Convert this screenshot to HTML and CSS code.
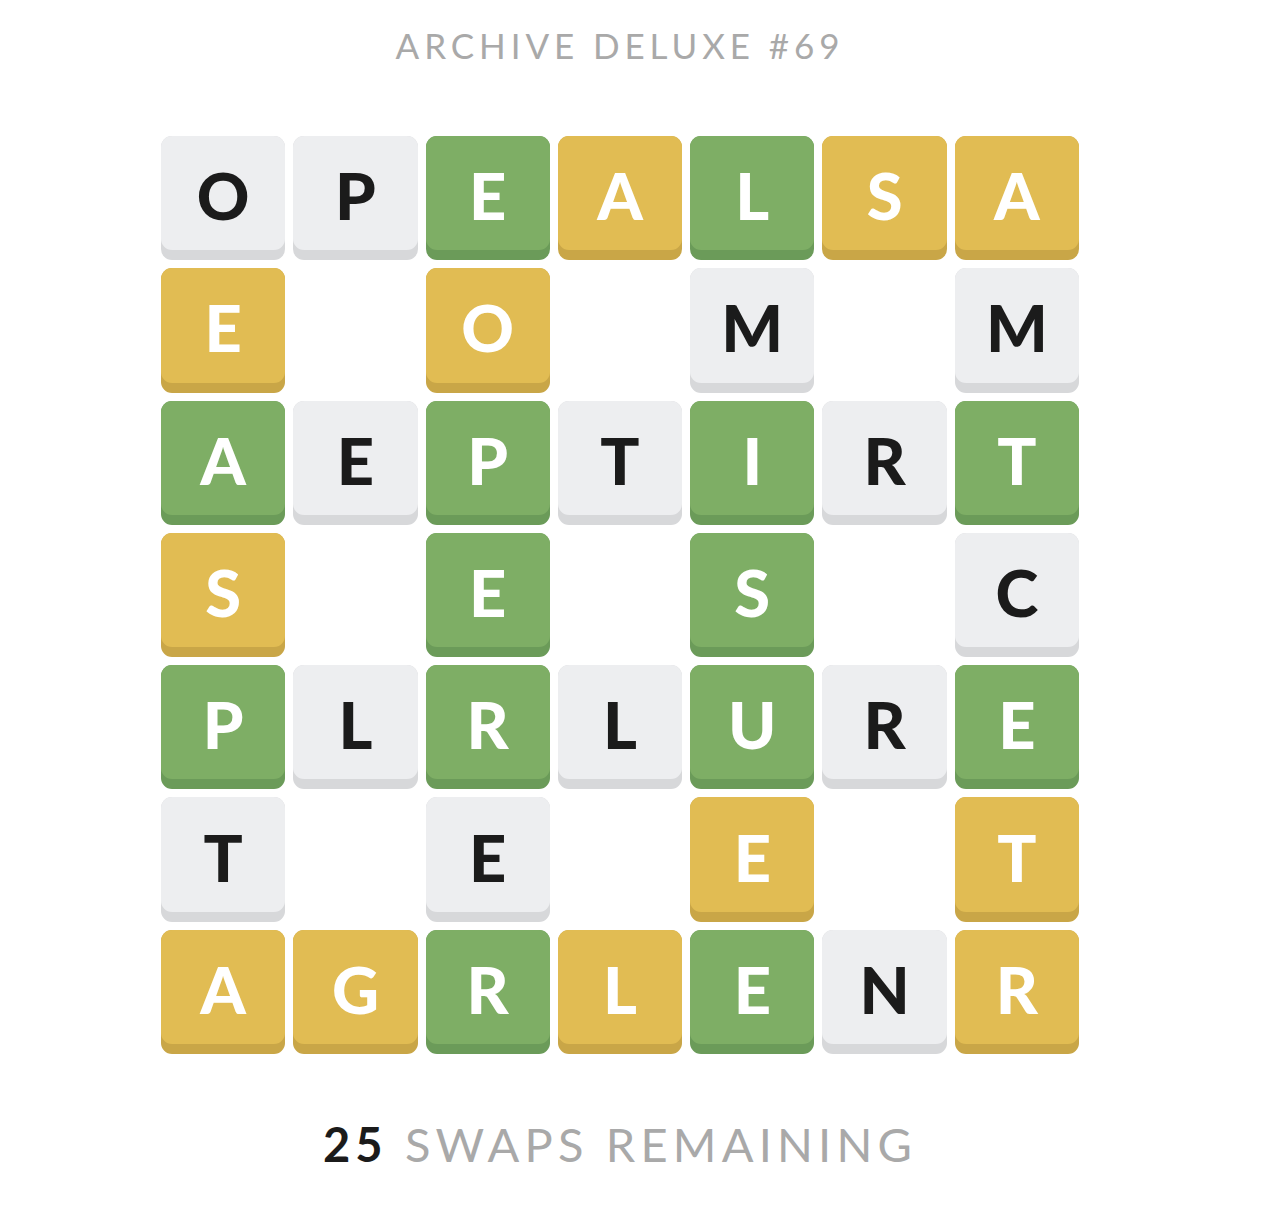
FILE: index.html
```html
<!DOCTYPE html>
<html>
<head>
<meta charset="utf-8">
<link rel="stylesheet" href="styles.css">
</head>
<body>
<main class="page">
  <h1 class="title">ARCHIVE DELUXE #69</h1>
  <div class="board">
    <div class="tile gray"><span>O</span></div>
    <div class="tile gray"><span>P</span></div>
    <div class="tile green"><span>E</span></div>
    <div class="tile yellow"><span>A</span></div>
    <div class="tile green"><span>L</span></div>
    <div class="tile yellow"><span>S</span></div>
    <div class="tile yellow"><span>A</span></div>

    <div class="tile yellow"><span>E</span></div>
    <div class="hole"></div>
    <div class="tile yellow"><span>O</span></div>
    <div class="hole"></div>
    <div class="tile gray"><span>M</span></div>
    <div class="hole"></div>
    <div class="tile gray"><span>M</span></div>

    <div class="tile green"><span>A</span></div>
    <div class="tile gray"><span>E</span></div>
    <div class="tile green"><span>P</span></div>
    <div class="tile gray"><span>T</span></div>
    <div class="tile green"><span>I</span></div>
    <div class="tile gray"><span>R</span></div>
    <div class="tile green"><span>T</span></div>

    <div class="tile yellow"><span>S</span></div>
    <div class="hole"></div>
    <div class="tile green"><span>E</span></div>
    <div class="hole"></div>
    <div class="tile green"><span>S</span></div>
    <div class="hole"></div>
    <div class="tile gray"><span>C</span></div>

    <div class="tile green"><span>P</span></div>
    <div class="tile gray"><span>L</span></div>
    <div class="tile green"><span>R</span></div>
    <div class="tile gray"><span>L</span></div>
    <div class="tile green"><span>U</span></div>
    <div class="tile gray"><span>R</span></div>
    <div class="tile green"><span>E</span></div>

    <div class="tile gray"><span>T</span></div>
    <div class="hole"></div>
    <div class="tile gray"><span>E</span></div>
    <div class="hole"></div>
    <div class="tile yellow"><span>E</span></div>
    <div class="hole"></div>
    <div class="tile yellow"><span>T</span></div>

    <div class="tile yellow"><span>A</span></div>
    <div class="tile yellow"><span>G</span></div>
    <div class="tile green"><span>R</span></div>
    <div class="tile yellow"><span>L</span></div>
    <div class="tile green"><span>E</span></div>
    <div class="tile gray"><span>N</span></div>
    <div class="tile yellow"><span>R</span></div>
  </div>
  <p class="status"><b class="count">25</b> SWAPS REMAINING</p>
</main>
</body>
</html>
```

FILE: styles.css
```css
html, body {
  margin: 0;
  padding: 0;
  background: #ffffff;
}

.page {
  width: 1240px;
  display: flex;
  flex-direction: column;
  align-items: center;
  font-family: "Lato", "Liberation Sans", sans-serif;
}

.title {
  margin: 24px 0 0 0;
  font-size: 35px;
  line-height: 42px;
  font-weight: 400;
  letter-spacing: 4.9px;
  color: #a9a9a9;
}

.board {
  margin-top: 70px;
  width: 918px;
  display: grid;
  grid-template-columns: repeat(7, 1fr);
  grid-auto-rows: 124.3px;
  gap: 8px;
}

.tile {
  position: relative;
  border-radius: 11px;
  display: flex;
  align-items: stretch;
}

.tile span {
  flex: 0 0 auto;
  width: 100%;
  height: calc(100% - 10px);
  border-radius: 11px;
  display: flex;
  align-items: center;
  justify-content: center;
  font-size: 65px;
  font-weight: 900;
  padding-top: 4px;
  box-sizing: border-box;
}

.gray { background: #d7d8da; }
.gray span { background: #edeef0; color: #1b1b1b; }

.yellow { background: #c9a647; }
.yellow span { background: #e1bc53; color: #ffffff; }

.green { background: #6b9b59; }
.green span { background: #7eae65; color: #ffffff; }

.status {
  margin: 62px 0 0 0;
  font-size: 47px;
  line-height: 56px;
  letter-spacing: 5.2px;
  color: #a9a9a9;
  font-weight: 400;
}

.count {
  color: #1b1b1b;
  font-weight: 700;
}
```
